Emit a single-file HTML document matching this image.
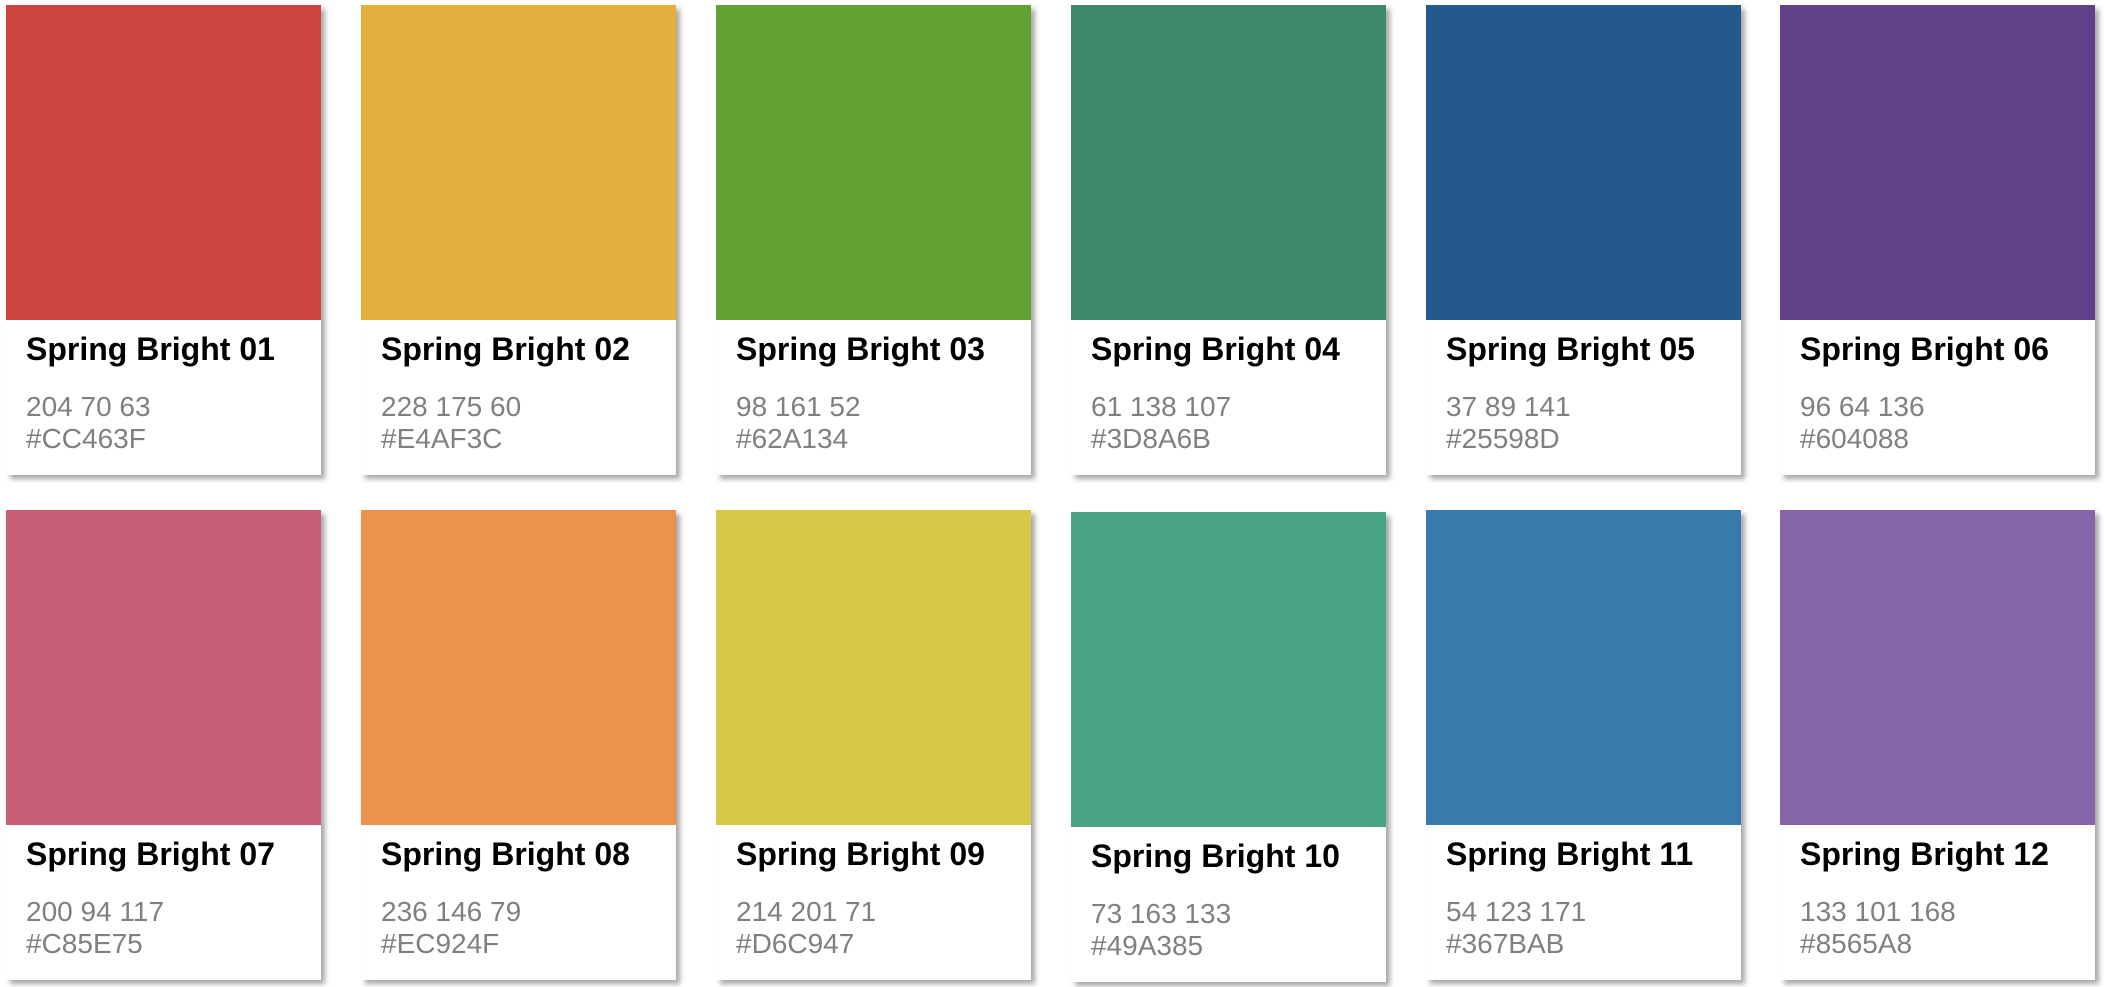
<!DOCTYPE html>
<html><head><meta charset="utf-8"><style>
body{margin:0;width:2104px;height:987px;background:#fff;position:relative;overflow:hidden;font-family:"Liberation Sans",sans-serif}
.c{position:absolute;width:315px;height:470px;background:#fff;box-shadow:4px 4px 5px rgba(0,0,0,.35)}
.s{height:315px}
.t{position:absolute;left:20px;top:326px;font-size:32px;font-weight:bold;color:#000;white-space:nowrap}
.v{position:absolute;left:20px;top:386px;font-size:28px;line-height:32px;color:#808080}
</style></head><body>
<div class="c" style="left:6px;top:5px"><div class="s" style="background:#CC463F"></div><div class="t">Spring Bright 01</div><div class="v">204 70 63<br>#CC463F</div></div>
<div class="c" style="left:361px;top:5px"><div class="s" style="background:#E4AF3C"></div><div class="t">Spring Bright 02</div><div class="v">228 175 60<br>#E4AF3C</div></div>
<div class="c" style="left:716px;top:5px"><div class="s" style="background:#62A134"></div><div class="t">Spring Bright 03</div><div class="v">98 161 52<br>#62A134</div></div>
<div class="c" style="left:1071px;top:5px"><div class="s" style="background:#3D8A6B"></div><div class="t">Spring Bright 04</div><div class="v">61 138 107<br>#3D8A6B</div></div>
<div class="c" style="left:1426px;top:5px"><div class="s" style="background:#25598D"></div><div class="t">Spring Bright 05</div><div class="v">37 89 141<br>#25598D</div></div>
<div class="c" style="left:1780px;top:5px"><div class="s" style="background:#604088"></div><div class="t">Spring Bright 06</div><div class="v">96 64 136<br>#604088</div></div>
<div class="c" style="left:6px;top:510px"><div class="s" style="background:#C85E75"></div><div class="t">Spring Bright 07</div><div class="v">200 94 117<br>#C85E75</div></div>
<div class="c" style="left:361px;top:510px"><div class="s" style="background:#EC924F"></div><div class="t">Spring Bright 08</div><div class="v">236 146 79<br>#EC924F</div></div>
<div class="c" style="left:716px;top:510px"><div class="s" style="background:#D6C947"></div><div class="t">Spring Bright 09</div><div class="v">214 201 71<br>#D6C947</div></div>
<div class="c" style="left:1071px;top:512px"><div class="s" style="background:#49A385"></div><div class="t">Spring Bright 10</div><div class="v">73 163 133<br>#49A385</div></div>
<div class="c" style="left:1426px;top:510px"><div class="s" style="background:#367BAB"></div><div class="t">Spring Bright 11</div><div class="v">54 123 171<br>#367BAB</div></div>
<div class="c" style="left:1780px;top:510px"><div class="s" style="background:#8565A8"></div><div class="t">Spring Bright 12</div><div class="v">133 101 168<br>#8565A8</div></div>
</body></html>
